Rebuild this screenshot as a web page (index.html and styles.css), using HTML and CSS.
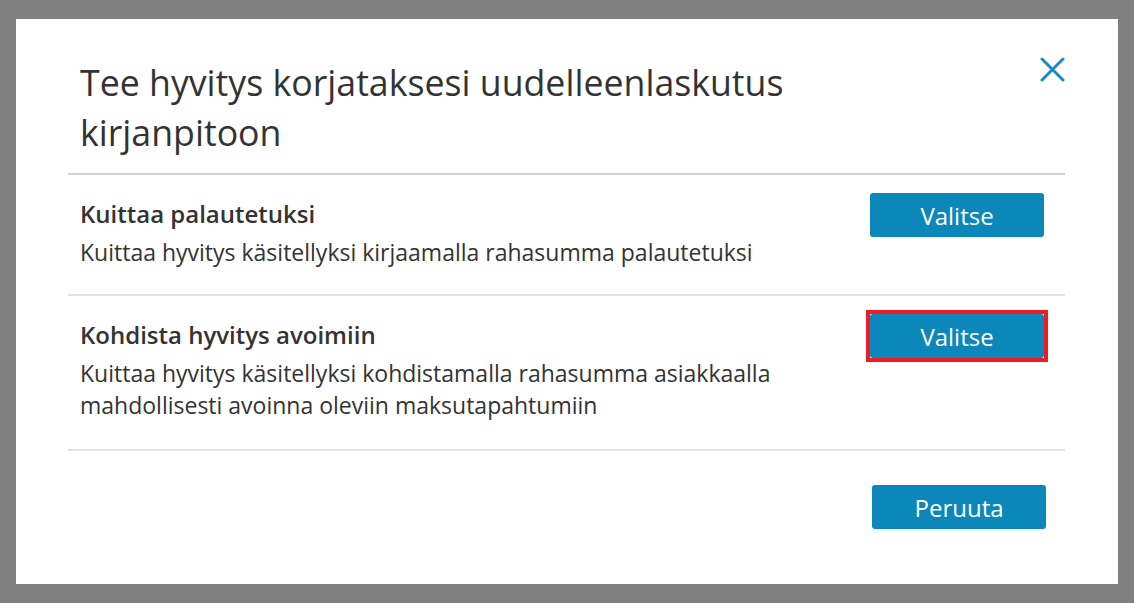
FILE: index.html
```html
<!doctype html>
<html>
<head>
<title>Tee hyvitys</title>
<meta charset="utf-8" />
<meta name="viewport" content="width=device-width, initial-scale=1" />
<link rel="stylesheet" href="styles.css">
</head>

<body>
<div class="dialog">
<div class="header">
<h1>Tee hyvitys korjataksesi uudelleenlaskutus kirjanpitoon</h1>
<button class="close" type="button" aria-label="Sulje">
<svg width="25" height="25" viewBox="0 0 25 25"><path d="M2 2 L23 23 M23 2 L2 23" stroke="#1a8bc0" stroke-width="3" stroke-linecap="round" fill="none"/></svg>
</button>
</div>

<div class="option">
<div class="text">
<h2>Kuittaa palautetuksi</h2>
<p>Kuittaa hyvitys käsitellyksi kirjaamalla rahasumma palautetuksi</p>
</div>
<button class="blue" type="button">Valitse</button>
</div>

<div class="option last">
<div class="text">
<h2>Kohdista hyvitys avoimiin</h2>
<p>Kuittaa hyvitys käsitellyksi kohdistamalla rahasumma asiakkaalla mahdollisesti avoinna oleviin maksutapahtumiin</p>
</div>
<span class="marked"><button class="blue" type="button">Valitse</button></span>
</div>

<div class="footer">
<button class="blue" type="button">Peruuta</button>
</div>
</div>
</body>
</html>
```

FILE: styles.css
```css
body {
background-color: #808080;
margin: 0;
padding: 19px 16px;
font-family: "Open Sans", "Noto Sans", Arial, sans-serif;
color: #333333;
}

.dialog {
background-color: #ffffff;
height: 565px;
box-sizing: border-box;
padding: 0 53px 0 52px;
}

.header {
display: flex;
justify-content: space-between;
align-items: flex-start;
padding: 38px 0 16px 12px;
border-bottom: 2px solid #d1d4d7;
}

h1 {
margin: 0;
font-size: 35.7px;
font-weight: normal;
line-height: 50px;
max-width: 740px;
}

.close {
background: none;
border: 0;
padding: 0;
margin-top: 0;
cursor: pointer;
}

.close svg {
display: block;
}

.option {
display: flex;
justify-content: space-between;
align-items: flex-start;
padding: 18px 21px 26px 12px;
border-bottom: 2px solid #e0e3e6;
}

.option.last {
padding-bottom: 28px;
}

.option h2 {
margin: 5px 0 6px 0;
font-size: 24px;
font-weight: 600;
line-height: 32px;
}

.option p {
margin: 0;
font-size: 23px;
line-height: 32px;
max-width: 740px;
}

button.blue {
display: block;
width: 174px;
height: 44px;
padding: 0;
font-family: inherit;
font-size: 24px;
color: #ffffff;
background-color: #0b87ba;
border: 0;
border-radius: 3px;
}

.marked {
display: block;
margin: -4px -4px 0 0;
border: 4px solid #ed1c24;
}

.footer {
display: flex;
justify-content: flex-end;
padding: 34px 19px 0 0;
}
```
